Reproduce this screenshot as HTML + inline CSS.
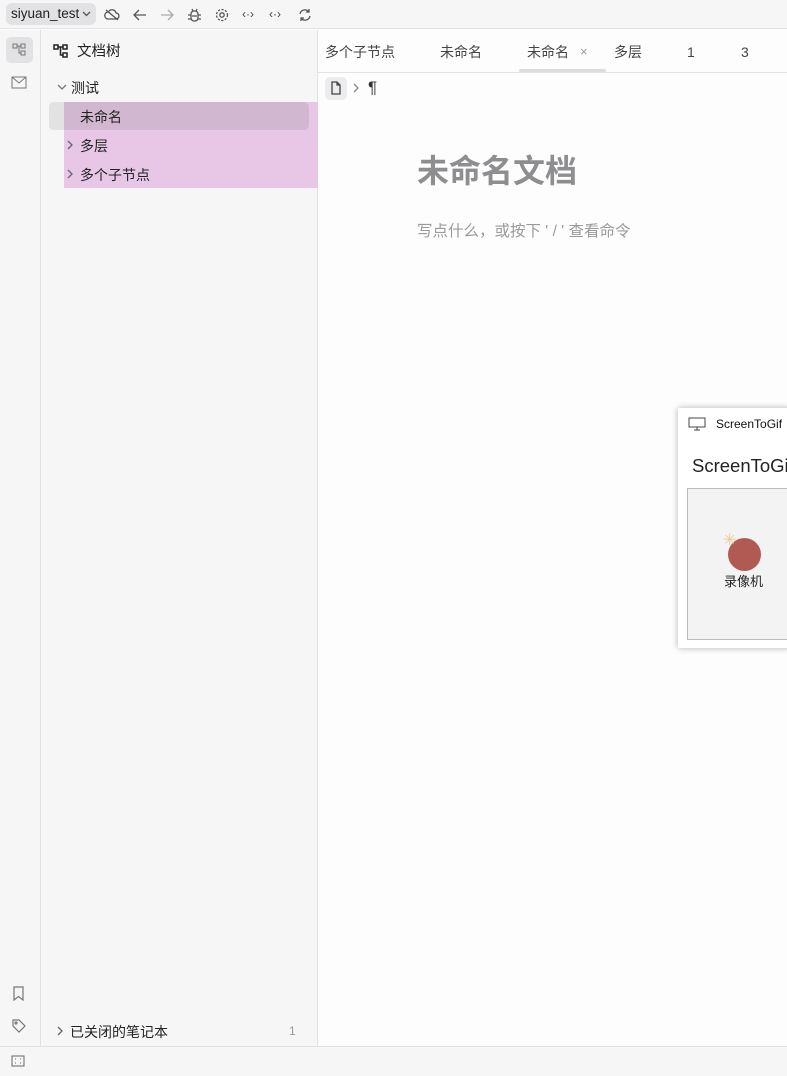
<!DOCTYPE html>
<html><head><meta charset="utf-8"><style>
*{margin:0;padding:0;box-sizing:border-box}
body{width:787px;height:1076px;overflow:hidden;background:#fdfdfd;font-family:"Liberation Sans","Noto Sans CJK SC",sans-serif;font-size:14px;color:#222;position:relative}
.a{position:absolute;line-height:1.2}
svg{fill:none;stroke:#555;stroke-width:1.3}
</style></head><body>
<div class="a" style="left:0;top:0;width:787px;height:29px;background:#f6f6f6;border-bottom:1px solid #e2e2e2"></div>
<div class="a" style="left:6px;top:3px;width:90px;height:22px;background:#e2e2e4;border-radius:6px"></div>
<div class="a" style="left:11px;top:6px;font-size:13.5px;color:#222">siyuan_test</div>
<svg class="a" style="left:82px;top:11px" width="9" height="6"><path d="M1 1l3.5 3.5L8 1"/></svg>
<svg class="a" style="left:104px;top:7px" width="16" height="16"><path d="M4 12h8a3 3 0 0 0 0-6 4 4 0 0 0-7.5-1A3 3 0 0 0 4 12zM2 3l12 10"/></svg>
<svg class="a" style="left:132px;top:7px" width="16" height="16"><path d="M14 8H2M7 3L2 8l5 5"/></svg>
<svg class="a" style="left:159px;top:7px;stroke:#aaa" width="16" height="16"><path d="M2 8h12M9 3l5 5-5 5"/></svg>
<svg class="a" style="left:187px;top:7px" width="15" height="16"><rect x="4" y="4" width="7" height="10" rx="3"/><path d="M1 8h3M11 8h3M1 12h3M11 12h3M5 2l1 2M10 2l-1 2M5 9h5"/></svg>
<svg class="a" style="left:214px;top:7px" width="16" height="16"><circle cx="8" cy="8" r="2.2"/><circle cx="8" cy="8" r="5.5" stroke-dasharray="2.2 1.4"/></svg>
<div class="a" style="left:242px;top:7px;font-size:12px;color:#444">‹·›</div>
<div class="a" style="left:269px;top:7px;font-size:12px;color:#444">‹·›</div>
<svg class="a" style="left:297px;top:7px" width="16" height="16"><path d="M12 5a5 5 0 0 0-9 2M4 11a5 5 0 0 0 9-2M12 2v3H9M4 14v-3h3"/></svg>
<div class="a" style="left:0;top:30px;width:41px;height:1016px;background:#f6f6f6;border-right:1px solid #e2e2e2"></div>
<div class="a" style="left:6px;top:37px;width:27px;height:26px;background:#e2e2e4;border-radius:5px"></div>
<svg class="a" style="left:12px;top:43px;stroke:#777;stroke-width:1" width="15" height="14"><rect x="1" y="1" width="4" height="4"/><rect x="9" y="1" width="4" height="4"/><rect x="9" y="8" width="4" height="4"/><path d="M5 3h4M7 3v7h2"/></svg>
<svg class="a" style="left:11px;top:76px;stroke:#777;stroke-width:1" width="16" height="13"><rect x="1" y="1" width="14" height="11"/><path d="M1 1l7 6 7-6"/></svg>
<svg class="a" style="left:12px;top:986px;stroke:#777;stroke-width:1.2" width="13" height="15"><path d="M2 1h9v13l-4.5-3.5L2 14z"/></svg>
<svg class="a" style="left:11px;top:1018px;stroke:#777;stroke-width:1.2" width="16" height="15"><path d="M2 2h6l6 6-6 6-6-6z"/><circle cx="5" cy="5" r="1"/></svg>
<div class="a" style="left:41px;top:30px;width:277px;height:1016px;background:#f6f6f6;border-right:1px solid #e2e2e2"></div>
<svg class="a" style="left:53px;top:44px;stroke:#222;stroke-width:1.5" width="16" height="15"><rect x="1" y="1" width="4" height="4"/><rect x="10" y="1" width="4" height="4"/><rect x="10" y="9" width="4" height="4"/><path d="M5 3h5M7.5 3v8h2.5"/></svg>
<div class="a" style="left:77px;top:44px;font-size:14.5px">文档树</div>
<svg class="a" style="left:57px;top:84px;stroke:#777" width="10" height="7"><path d="M1 1l4 4 4-4"/></svg>
<div class="a" style="left:71px;top:80px">测试</div>
<div class="a" style="left:64px;top:102px;width:254px;height:86px;background:#e8c7e6"></div>
<div class="a" style="left:49px;top:102px;width:260px;height:28px;background:rgba(190,170,190,0.55);border-radius:5px"></div>
<div class="a" style="left:49px;top:102px;width:15px;height:28px;background:#e2e2e2;border-radius:5px 0 0 5px"></div>
<div class="a" style="left:80px;top:109px">未命名</div>
<svg class="a" style="left:67px;top:140px;stroke:#666" width="6" height="10"><path d="M1 1l4 4-4 4"/></svg>
<div class="a" style="left:80px;top:138px">多层</div>
<svg class="a" style="left:67px;top:169px;stroke:#666" width="6" height="10"><path d="M1 1l4 4-4 4"/></svg>
<div class="a" style="left:80px;top:167px">多个子节点</div>
<svg class="a" style="left:57px;top:1026px;stroke:#666" width="6" height="10"><path d="M1 1l4 4-4 4"/></svg>
<div class="a" style="left:70px;top:1024px">已关闭的笔记本</div>
<div class="a" style="left:289px;top:1024px;color:#999;font-size:12px">1</div>
<div class="a" style="left:0;top:1046px;width:787px;height:30px;background:#f6f6f6;border-top:1px solid #e2e2e2"></div>
<svg class="a" style="left:11px;top:1055px;stroke:#666;stroke-width:1" width="14" height="12"><rect x="1" y="1" width="12" height="10"/><path d="M4 4h1M9 4h1M4 8h1M9 8h1"/></svg>
<div class="a" style="left:318px;top:72px;width:469px;height:1px;background:#e2e2e2"></div>
<div class="a" style="left:325px;top:44px;color:#444">多个子节点</div>
<div class="a" style="left:440px;top:44px;color:#444">未命名</div>
<div class="a" style="left:527px;top:44px;color:#444">未命名</div>
<div class="a" style="left:580px;top:44px;color:#999;font-size:13px">×</div>
<div class="a" style="left:519px;top:69px;width:87px;height:3px;background:#dcdcdf;border-radius:2px"></div>
<div class="a" style="left:614px;top:44px;color:#444">多层</div>
<div class="a" style="left:687px;top:44px;color:#444">1</div>
<div class="a" style="left:741px;top:44px;color:#444">3</div>
<div class="a" style="left:325px;top:77px;width:22px;height:23px;background:#ececee;border-radius:5px"></div>
<svg class="a" style="left:330px;top:81px;stroke:#444" width="12" height="14"><path d="M2 1h5l3 3v9H2zM7 1v3h3"/></svg>
<svg class="a" style="left:353px;top:83px;stroke:#888" width="6" height="10"><path d="M1 1l4 4-4 4"/></svg>
<div class="a" style="left:368px;top:78px;font-size:17px;color:#333">¶</div>
<div class="a" style="left:417px;top:152px;font-size:32px;font-weight:bold;color:#8e8e91">未命名文档</div>
<div class="a" style="left:417px;top:223px;font-size:15.5px;color:#9a9a9d">写点什么，或按下 ' / ' 查看命令</div>
<div class="a" style="left:678px;top:408px;width:115px;height:240px;background:#fff;box-shadow:0 0 6px rgba(0,0,0,.3)"></div>
<svg class="a" style="left:688px;top:417px;stroke:#444;stroke-width:1" width="18" height="14"><rect x="1" y="1" width="16" height="9"/><path d="M6 13h6M9 10v3"/></svg>
<div class="a" style="left:716px;top:417px;font-size:12px;color:#111;white-space:nowrap">ScreenToGif</div>
<div class="a" style="left:692px;top:455px;font-size:18.5px;color:#222;white-space:nowrap">ScreenToGif</div>
<div class="a" style="left:687px;top:488px;width:110px;height:152px;background:#f3f3f3;border:1px solid #bbb"></div>
<div class="a" style="left:728px;top:538px;width:33px;height:33px;border-radius:50%;background:#b15a54"></div>
<div class="a" style="left:723px;top:531px;font-size:16px;color:#f0c890">✳</div>
<div class="a" style="left:724px;top:574px;font-size:13px;color:#222">录像机</div>
</body></html>
